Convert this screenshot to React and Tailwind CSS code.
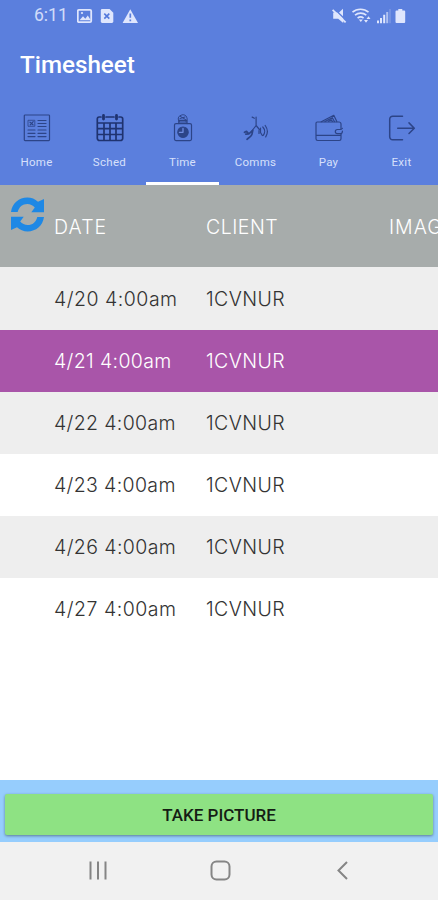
const ROWS = [
  { date: "4/20 4:00am", client: "1CVNUR", tracking: "tracking-[0.5px]" },
  { date: "4/21 4:00am", client: "1CVNUR", tracking: "tracking-[0.35px]", selected: true },
  { date: "4/22 4:00am", client: "1CVNUR", tracking: "tracking-[0.35px]" },
  { date: "4/23 4:00am", client: "1CVNUR", tracking: "tracking-[0.35px]" },
  { date: "4/26 4:00am", client: "1CVNUR", tracking: "tracking-[0.4px]" },
  { date: "4/27 4:00am", client: "1CVNUR", tracking: "tracking-[0.5px]" },
];

function TabIcon({ children }) {
  return (
    <svg
      viewBox="0 0 28 28"
      className="w-7 h-7"
      fill="none"
      stroke="#2c4488"
      strokeWidth="1.2"
      strokeLinecap="round"
      strokeLinejoin="round"
    >
      {children}
    </svg>
  );
}

const TABS = [
  {
    name: "Home",
    icon: (
      <TabIcon>
        <rect x="1.3" y="1" width="25.2" height="25.6" rx="0.8" />
        <rect x="5.4" y="6.3" width="6.4" height="6" strokeWidth="0.8" />
        <path d="M7 8.2l3 2.6M10.2 7.7l-3 3.2M15 6.5h8M15 9.5h8M15 12.5h8M5 16h7M5 19.3h7M5 22.6h7M15 16h8M15 19.3h8M15 22.6h8" />
      </TabIcon>
    ),
  },
  {
    name: "Sched",
    icon: (
      <TabIcon>
        <path
          d="M5 3H3.2A2 2 0 0 0 1.3 5v19.3a2.2 2.2 0 0 0 2.2 2.2h21a2.2 2.2 0 0 0 2.2-2.2V5a2 2 0 0 0-2-2H23M10 3h8M1.3 9h25.4M1.3 14.7h25.4M1.3 20.5h25.4M8 9v17.5M14 9v17.5M20 9v17.5"
          strokeWidth="1.7"
          stroke="#1f3370"
        />
        <path d="M7.5 1.5v3.6M20.5 1.5v3.6" strokeWidth="2.8" stroke="#1f3370" />
      </TabIcon>
    ),
  },
  {
    name: "Time",
    icon: (
      <TabIcon>
        <path d="M10.3 7.5C8.4 5.6 9 2 12 1.4c1.7-1.5 5.6-.3 5.8 2.2.8 1.5.3 3-1 3.9M11 4.5l5-1.5M11.5 2.5l5 3" strokeWidth="1" />
        <rect x="9.8" y="6.4" width="8.2" height="3.2" fill="#2c4488" fillOpacity="0.5" />
        <path d="M9.5 9.6H7a1.5 1.5 0 0 0-1.5 1.5v14A1.5 1.5 0 0 0 7 26.6h14a1.5 1.5 0 0 0 1.5-1.5v-14A1.5 1.5 0 0 0 21 9.6h-2.8" />
        <circle cx="14" cy="18.2" r="5.2" fill="#2c4488" />
        <path d="M14 14.5v3.8h-3.6" stroke="#6f8ce0" strokeWidth="1.3" />
      </TabIcon>
    ),
  },
  {
    name: "Comms",
    icon: (
      <TabIcon>
        <path d="M14.1 3v8.5M14.1 11.5l-4.7 6M14.1 11.5l3.3 4M10.2 3.1l2.2 1.1" />
        <path d="M2.5 18.3l2-1 2.3 2.5 4-3.5-.8 3.8c-.4 2-2.8 3.5-5 5.2M6.8 19.8l-3 .3" strokeWidth="1.7" />
        <path d="M18.5 14v4.5l1.8 3M17 16.5v3M20.8 13c2.4 2.5 2.3 6 .4 8.4M23.2 11.5c2.7 3.6 2.6 8 .5 11.4" />
      </TabIcon>
    ),
  },
  {
    name: "Pay",
    icon: (
      <TabIcon>
        <path d="M26 15V10a2 2 0 0 0-2-2H2.2A1.2 1.2 0 0 0 1 9.2v15.6a1.7 1.7 0 0 0 1.7 1.7h21.6a1.7 1.7 0 0 0 1.7-1.7V20M1 21.3h25" />
        <path d="M27.4 14.3c-.6 1-1 1.2-2 1.2h-3a2.1 2.1 0 0 0 0 4.2h3c1.4 0 2-1.4 2-2.5M6.3 7.7l12.5-6.4 3 6.2M10 7.5l7.3-3.8 2.1 3.8M13.5 7.3l2.8-1.4 1 1.5" />
      </TabIcon>
    ),
  },
  {
    name: "Exit",
    icon: (
      <TabIcon>
        <path
          d="M14.5 2.2H4.7a3 3 0 0 0-3 3v17.6a3 3 0 0 0 3 3h9.8M9.7 14.2h16.5M21 8.9l5.3 5.3-5.3 5.3"
          strokeWidth="1.5"
        />
      </TabIcon>
    ),
  },
];

function StatusBar() {
  return (
    <div className="h-[31px] flex items-center justify-between pl-[34px] pr-[31px] text-[#dfe6fd]">
      <div className="flex items-center">
        <span className="w-[43px] text-[17.5px] leading-none opacity-90">6:11</span>
        <svg viewBox="0 0 62 16" className="w-[62px] h-4">
          <rect x="0.8" y="1.8" width="13.4" height="12.4" rx="1.2" fill="none" stroke="currentColor" strokeWidth="1.8" />
          <path d="M2.5 12.3l3.5-4 2.3 2.4 2.5-3.2 3 4.8z" fill="currentColor" />
          <circle cx="5" cy="5" r="1.1" fill="currentColor" />
          <path d="M25.2 1h7.4l3.7 3.8V13.6a1.4 1.4 0 0 1-1.4 1.4H25.2a1.4 1.4 0 0 1-1.4-1.4V2.4A1.4 1.4 0 0 1 25.2 1z" fill="currentColor" />
          <path d="M27.3 5.6l5 5M32.3 5.6l-5 5" stroke="#5479dc" strokeWidth="1.6" />
          <path d="M53.3 1.3L61 15H45.6z" fill="currentColor" />
          <path d="M53.3 5.5v4.3M53.3 11.5v1.8" stroke="#5b7fdd" strokeWidth="1.7" />
        </svg>
      </div>
      <svg viewBox="0 0 76 16" className="w-[76px] h-4">
        <path d="M2.2 4.5h4l6 6V15l-5-4.2h-5zM8 4.4L12 .8v7.4z" fill="currentColor" />
        <path d="M1.6 1.8l13 12.6" stroke="currentColor" strokeWidth="1.8" />
        <g fill="none" stroke="currentColor" strokeWidth="1.6">
          <path d="M21.5 4.2c4.5-3.9 11.5-3.9 16 0M24 7.2c3.3-2.8 8-2.8 11.3 0M26.6 10.1c1.8-1.5 4.2-1.5 6 0" />
        </g>
        <path d="M27.8 11.5h4l-2 2.5zM33 12h4l-2 2.8zM35.5 11h4l-2-2.7z" fill="currentColor" />
        <path d="M47 12.5v2.7M50 10v5.2M53.2 6.8v8.4" stroke="currentColor" strokeWidth="2" />
        <path d="M56.2 4v11.2" stroke="currentColor" strokeWidth="2" opacity="0.65" />
        <path d="M59 1v14.2" stroke="currentColor" strokeWidth="1.2" opacity="0.3" />
        <path d="M67.3 1h4v1.5h1.9a1 1 0 0 1 1 1v10.6a1 1 0 0 1-1 1h-7.7a1 1 0 0 1-1-1V3.5a1 1 0 0 1 1-1h1.8z" fill="currentColor" />
      </svg>
    </div>
  );
}

function RefreshIcon() {
  return (
    <svg viewBox="0 0 35 35" className="w-[35px] h-[35px]" fill="#1e88e5">
      <path d="M1 15C2.2 6.3 9 .6 17.3.6c4.3 0 7.7 1.5 10.7 4.2L34 2v13.2H21.3l3.5-4.8a10.2 10.2 0 0 0-7.5-3.5c-4.8 0-8.3 2.9-9.6 8.1z" />
      <path d="M34 20c-1.2 8.7-8 14.4-16.3 14.4-4.3 0-7.7-1.5-10.7-4.2L1 33V19.8h12.7l-3.5 4.8a10.2 10.2 0 0 0 7.5 3.5c4.8 0 8.3-2.9 9.6-8.1z" />
    </svg>
  );
}

export default function App() {
  return (
    <div className="w-[438px] h-[900px] flex flex-col overflow-hidden bg-white font-['Roboto',sans-serif]">
      {/* Header */}
      <header className="h-[185px] shrink-0 flex flex-col bg-[#5b7fdd]">
        <StatusBar />
        <h1 className="h-[69px] pl-5 text-[24.2px] leading-[68px] font-medium text-white">
          Timesheet
        </h1>
        <nav className="flex-1 grid grid-cols-6">
          {TABS.map((tab) => (
            <button
              key={tab.name}
              className={`flex flex-col items-center pt-[14px] border-b-[3px] ${
                tab.name === "Time" ? "border-white" : "border-transparent"
              }`}
            >
              {tab.icon}
              <span className="mt-[13px] text-[11.5px] leading-[15px] tracking-[0.3px] text-[#d7e0fb]">
                {tab.name}
              </span>
            </button>
          ))}
        </nav>
      </header>

      {/* Table */}
      <main className="flex-1 overflow-hidden font-['Inter',sans-serif] text-[19.5px]">
        <div className="h-[82px] flex bg-[#a7acab] text-white leading-[84px] whitespace-nowrap">
          <div className="w-[54px] shrink-0 pl-[9.5px] pt-3">
            <RefreshIcon />
          </div>
          <div className="w-[152px] shrink-0 font-light tracking-[1.1px]">DATE</div>
          <div className="w-[183px] shrink-0 font-light tracking-[0.5px]">CLIENT</div>
          <div className="shrink-0 font-light tracking-[1px]">IMAGE</div>
        </div>
        {ROWS.map((row, i) => (
          <div
            key={row.date}
            className={`flex pl-[54px] leading-[62px] font-light ${
              i === 0 ? "h-[63px] pt-px" : "h-[62px]"
            } ${
              row.selected
                ? "bg-[#a955a9] text-white"
                : i % 2 === 0
                  ? "bg-[#eeeeee] text-[#333]"
                  : "bg-white text-[#333]"
            }`}
          >
            <div className={`w-[152px] ${row.tracking}`}>{row.date}</div>
            <div className="tracking-[0.4px]">{row.client}</div>
          </div>
        ))}
      </main>

      {/* Action */}
      <div className="h-[62px] shrink-0 px-[5px] pt-[14px] bg-[#96cdfd]">
        <button className="w-full h-[41px] pt-[2px] rounded-[2px] bg-[#8ee283] text-[17px] font-medium text-[#151d14] shadow-[0_1px_3px_rgba(0,0,0,0.4)]">
          TAKE PICTURE
        </button>
      </div>

      {/* System navigation */}
      <div className="h-[58px] shrink-0 bg-[#f1f1f1]">
        <svg viewBox="0 0 438 58" className="w-full h-full" fill="none" stroke="#858585" strokeWidth="2">
          <path d="M90.5 19.5v18M98 19.5v18M105.5 19.5v18" />
          <rect x="211.5" y="19.5" width="18" height="18" rx="5" />
          <path d="M347 20l-8.5 8.5L347 37" />
        </svg>
      </div>
    </div>
  );
}
